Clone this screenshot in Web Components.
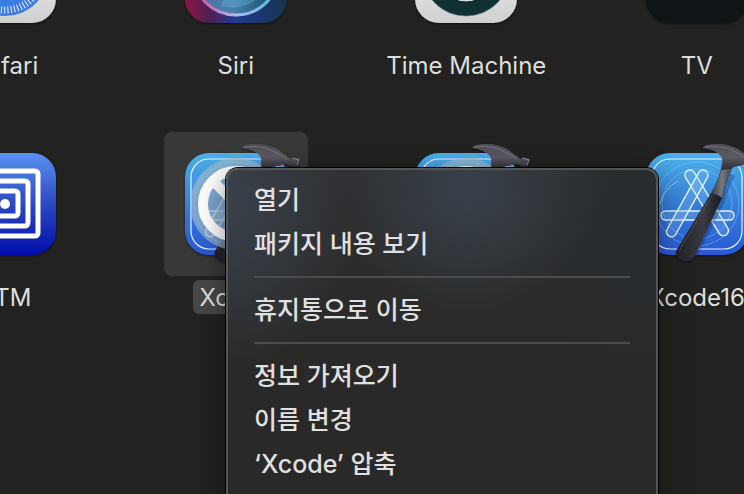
<!DOCTYPE html>
<html lang="ko">
<head>
<meta charset="utf-8">
<title>응용 프로그램</title>
<style>
    body {
        margin: 0;
        min-height: 100vh;
        overflow: hidden;
        background: #222220;
        color: #dedede;
        font-family: Inter, "Noto Sans CJK KR", sans-serif;
    }
</style>
</head>
<body>

<finder-window>
    <app-item name="Safari" icon="safari"></app-item>
    <app-item name="Siri" icon="siri"></app-item>
    <app-item name="Time Machine" icon="time"></app-item>
    <app-item name="TV" icon="tv"></app-item>
    <app-item name="STM" icon="stm"></app-item>
    <app-item name="Xcode" icon="blocked" selected></app-item>
    <app-item name="Xcode15" icon="blocked"></app-item>
    <app-item name="Xcode16" icon="xcode"></app-item>

    <context-menu slot="menu">
        <menu-item>열기</menu-item>
        <menu-item>패키지 내용 보기</menu-item>
        <menu-separator></menu-separator>
        <menu-item>휴지통으로 이동</menu-item>
        <menu-separator></menu-separator>
        <menu-item>정보 가져오기</menu-item>
        <menu-item>이름 변경</menu-item>
        <menu-item>‘Xcode’ 압축</menu-item>
    </context-menu>
</finder-window>

<script>
// All the icons share a 144 x 144 box, the tile itself is 102 wide
const xcodeTile = `
    <rect x="21" y="21" width="102" height="102" rx="24" fill="url(#blue)"/>
    <rect x="27" y="27" width="90" height="90" rx="18" fill="none" stroke="#e4f4ff" stroke-width="1.2"/>
    <g fill="none" stroke="#9ed2fb" stroke-opacity=".5" stroke-width=".8">
        <circle cx="72" cy="72" r="42"/><circle cx="72" cy="72" r="35"/>
    </g>
    <path d="M35 72 A37 37 0 0 1 53 49" fill="none" stroke="#b9e0ff" stroke-opacity=".7"/>
    <g fill="#8fc6f5" fill-opacity=".25" stroke="#e4f4ff" stroke-width="1.4">
        <rect x="-5" y="-5" width="10" height="75" rx="5" transform="translate(65 43) rotate(-31)"/>
        <rect x="36" y="79" width="73" height="9" rx="4.500"/>
        <rect x="-5" y="-5" width="10" height="75" rx="5" transform="translate(78 43) rotate(29)"/>
    </g>`;

const handle = `
    <path d="M101 40 L110 44 Q105 52 100 69 L73 123 Q66 128 57 124 L88 62 Z" fill="#06244f" opacity=".3"/>
    <path d="M98 28 L108 34 Q101 47 97 66 L86 62 Q96 44 98 28 Z" fill="url(#steel)" stroke="#303038" stroke-width=".6"/>
    <path d="M86 61 Q92 62 97 66 L70 124 Q66 131 58 129 Q49 126 51 119 Z" fill="url(#grip)"/>
    <path d="M87 64 L54 119" stroke="#65656d" stroke-width="1" opacity=".5"/>`;

const head = `
    <path d="M78 16 Q78 13 87 12 L98 12 Q111 14 120 22 L127 27 Q129 24 136 27 L134 34 Q130 36 125 33 Q119 31 115 34 Q109 34 105 37 L96 38 Q99 31 96 24 Q91 18 78 16 Z" fill="url(#head)"/>
    <path d="M80 15 Q96 13 107 18 T123 28" fill="none" stroke="#8b8b93" stroke-width="1" opacity=".6"/>
    <path d="M128 26 L135 28 L133 33" fill="none" stroke="#a0a0aa" stroke-width="1" opacity=".7"/>`;

const icons = {
    safari: `
        <rect x="21" y="21" width="102" height="102" rx="24" fill="url(#silver)"/>
        <circle cx="72" cy="72" r="44" fill="#3d7de2"/>
        <circle cx="72" cy="72" r="38" fill="none" stroke="#e7f0fb" stroke-width="7" stroke-dasharray="1 2.300"/>`,
    siri: `
        <rect x="21" y="21" width="102" height="102" rx="24" fill="url(#siri)"/>
        <circle cx="72" cy="72" r="43" fill="url(#orb)" stroke="url(#ring)" stroke-width="3"/>
        <path d="M56 106 L64 92 Q76 108 100 92 Q84 112 56 106 Z" fill="#70b6d5" opacity=".35"/>`,
    time: `
        <rect x="21" y="21" width="102" height="102" rx="24" fill="url(#silver)"/>
        <circle cx="72" cy="72" r="44" fill="#103034" stroke="#527078" stroke-width=".6"/>
        <circle cx="72" cy="72" r="30" fill="#d8dcdc" stroke="#071d20" stroke-width="1"/>`,
    tv: `<rect x="21" y="21" width="102" height="102" rx="24" fill="#101416"/>`,
    stm: `
        <rect x="21" y="21" width="102" height="102" rx="24" fill="url(#deep)"/>
        <g fill="none" stroke="#fff" stroke-width="5">
            <rect x="39" y="39" width="66" height="65" rx="3"/>
            <rect x="49" y="49" width="46" height="45" rx="3"/>
            <rect x="59" y="59" width="26" height="25" rx="3"/>
        </g>
        <circle cx="72" cy="72" r="5" fill="#fff"/>`,
    xcode: xcodeTile + handle + head,
    blocked: xcodeTile + handle + `
        <circle cx="72" cy="72" r="46" fill="#a3bccd" opacity=".65"/>
        <circle cx="72" cy="72" r="33" fill="none" stroke="#fff" stroke-width="10"/>
        <path d="M49 49 L95 95" stroke="#fff" stroke-width="10"/>` + head
};

const defs = `
    <defs>
        <linearGradient id="blue" x2="0" y2="1"><stop stop-color="#4bb2e8"/><stop offset=".5" stop-color="#377fda"/><stop offset="1" stop-color="#2859d5"/></linearGradient>
        <linearGradient id="deep" x2="0" y2="1"><stop stop-color="#5b92f0"/><stop offset=".5" stop-color="#2b49c2"/><stop offset="1" stop-color="#000da8"/></linearGradient>
        <linearGradient id="silver" x2="0" y2="1"><stop stop-color="#fff"/><stop offset="1" stop-color="#d0d0d0"/></linearGradient>
        <linearGradient id="siri"><stop stop-color="#8b1742"/><stop offset=".25" stop-color="#4c2054"/><stop offset=".48" stop-color="#203a91"/><stop offset="1" stop-color="#17344b"/></linearGradient>
        <linearGradient id="ring"><stop stop-color="#c04b8b"/><stop offset=".5" stop-color="#b8b5ed"/><stop offset="1" stop-color="#49bcea"/></linearGradient>
        <linearGradient id="orb"><stop stop-color="#5864a3"/><stop offset=".45" stop-color="#4683ad"/><stop offset="1" stop-color="#154862"/></linearGradient>
        <linearGradient id="steel"><stop stop-color="#3b3b42"/><stop offset=".5" stop-color="#77777e"/><stop offset="1" stop-color="#3d3d45"/></linearGradient>
        <linearGradient id="grip"><stop stop-color="#202127"/><stop offset=".6" stop-color="#393a42"/><stop offset="1" stop-color="#191a20"/></linearGradient>
        <linearGradient id="head" x2="0" y2="1"><stop stop-color="#4d4c54"/><stop offset=".5" stop-color="#5c5b64"/><stop offset="1" stop-color="#2b2b32"/></linearGradient>
    </defs>`;

class FinderWindow extends HTMLElement {

    connectedCallback() {
        this.attachShadow({ mode: "open" });
        this.shadowRoot.innerHTML = `
            <style>
                :host {
                    display: block;
                    position: relative;
                    height: 100vh;
                    overflow: hidden;
                }
                /* the list is scrolled, its edges are out of view */
                main {
                    display: grid;
                    grid-template-columns: repeat(4, 1fr);
                    row-gap: 50px;
                    margin: -100px -68px 0 -110px;
                }
            </style>
            <main><slot></slot></main>
            <slot name="menu"></slot>
        `;
    }
}
customElements.define("finder-window", FinderWindow);


class AppItem extends HTMLElement {

    connectedCallback() {
        this.attachShadow({ mode: "open" });
        this.render();
    }

    render() {
        this.shadowRoot.innerHTML = `
            <style>
                :host {
                    display: flex;
                    flex-direction: column;
                    align-items: center;
                    gap: 4px;
                }
                .icon {
                    width: 144px;
                    height: 144px;
                    border-radius: 8px;
                }
                svg {
                    display: block;
                    overflow: visible;
                    filter: drop-shadow(0 1px 1px #0008);
                }
                .name {
                    padding: 2px 7px 0;
                    border-radius: 6px;
                    font-size: 24px;
                    line-height: 32px;
                    white-space: nowrap;
                }
                :host([selected]) .icon { background: #383836; }
                :host([selected]) .name { background: #484847; }
            </style>
            <div class="icon">
                <svg width="144" height="144" viewBox="0 0 144 144" aria-hidden="true">${defs}${icons[this.getAttribute("icon")]}</svg>
            </div>
            <span class="name">${this.getAttribute("name")}</span>
        `;
    }
}
customElements.define("app-item", AppItem);


class ContextMenu extends HTMLElement {

    connectedCallback() {
        this.attachShadow({ mode: "open" });
        this.setAttribute("role", "menu");
        this.shadowRoot.innerHTML = `
            <style>
                :host {
                    display: flex;
                    flex-direction: column;
                    box-sizing: border-box;
                    position: absolute;
                    left: 226px;
                    top: 168px;
                    width: 432px;
                    padding: 8px 26px 28px;
                    border: 2px solid #535557;
                    border-radius: 12px;
                    box-shadow: 0 0 0 1px #000, 0 8px 30px #0007;
                    background:
                        radial-gradient(ellipse 130px 130px at 240px 15px, #39414b, #39414b00),
                        radial-gradient(ellipse 130px 170px at 0 30px, #3a414b, #3a414b00),
                        radial-gradient(ellipse 150px 170px at 100% 40px, #272c31, #272c3100),
                        linear-gradient(#2e2f31, #292927 200px);
                }
            </style>
            <slot></slot>
        `;
    }
}
customElements.define("context-menu", ContextMenu);


class MenuItem extends HTMLElement {

    connectedCallback() {
        this.attachShadow({ mode: "open" });
        this.shadowRoot.innerHTML = `
            <style>
                :host { display: block; }
                button {
                    display: block;
                    width: 100%;
                    height: 44px;
                    padding: 0;
                    border: 0;
                    background: none;
                    color: #e0e0e0;
                    font: 500 25px/44px Inter, "Noto Sans CJK KR", sans-serif;
                    text-align: left;
                    white-space: nowrap;
                }
            </style>
            <button type="button" role="menuitem"><slot></slot></button>
        `;
    }
}
customElements.define("menu-item", MenuItem);


class MenuSeparator extends HTMLElement {

    connectedCallback() {
        this.attachShadow({ mode: "open" });
        this.shadowRoot.innerHTML = `
            <style>
                :host { display: block; padding: 10px 0; }
                hr { height: 2px; margin: 0; border: 0; background: #4b4c4c; }
            </style>
            <hr>
        `;
    }
}
customElements.define("menu-separator", MenuSeparator);
</script>
</body>
</html>
